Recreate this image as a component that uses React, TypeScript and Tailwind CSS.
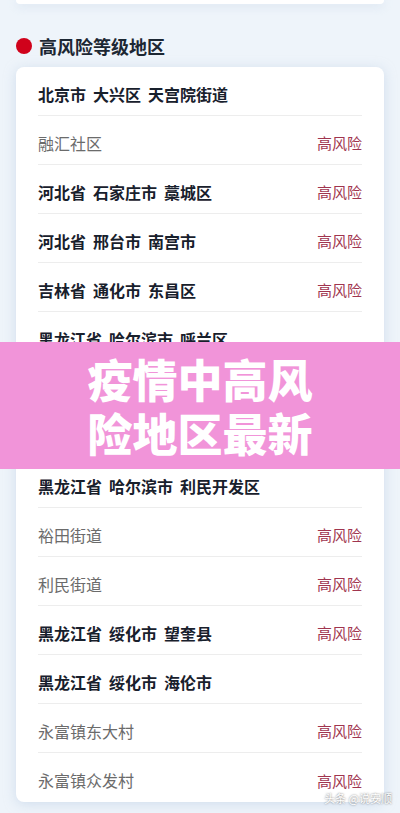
const rows: { name: string; bold?: boolean; risk?: boolean }[] = [
  { name: '北京市 大兴区 天宫院街道', bold: true },
  { name: '融汇社区', risk: true },
  { name: '河北省 石家庄市 藁城区', bold: true, risk: true },
  { name: '河北省 邢台市 南宫市', bold: true, risk: true },
  { name: '吉林省 通化市 东昌区', bold: true, risk: true },
  { name: '黑龙江省 哈尔滨市 呼兰区', bold: true },
  { name: '' },
  { name: '' },
  { name: '黑龙江省 哈尔滨市 利民开发区', bold: true },
  { name: '裕田街道', risk: true },
  { name: '利民街道', risk: true },
  { name: '黑龙江省 绥化市 望奎县', bold: true, risk: true },
  { name: '黑龙江省 绥化市 海伦市', bold: true },
  { name: '永富镇东大村', risk: true },
  { name: '永富镇众发村', risk: true },
];

export default function App() {
  return (
    <div
      className="relative w-[400px] h-[813px] overflow-hidden bg-[#eef4fa]"
      style={{ fontFamily: '"Noto Sans CJK SC", "Noto Sans", sans-serif' }}
    >
      {/* bottom edge of the previous card */}
      <div className="mx-4 h-[4px] rounded-b-lg bg-white shadow-[0_2px_10px_rgba(180,200,225,0.45)]" />

      <div className="flex items-center h-[22px] mt-[31px] px-4">
        <span className="w-4 h-4 rounded-full bg-[#d0021b]" />
        <span className="ml-[7px] text-[18px] font-bold leading-none text-[#1c2733]">高风险等级地区</span>
      </div>

      <div className="mx-4 mt-[10px] rounded-lg bg-white px-[22px] shadow-[0_2px_12px_rgba(180,200,225,0.5)]">
        {rows.map((r, i) => (
          <div
            key={i}
            className={`flex items-center justify-between h-[49px] pt-[5px] ${i < rows.length - 1 ? 'border-b border-[#ededed]' : ''}`}
          >
            <div
              className={`flex gap-[7px] text-[16px] leading-none ${r.bold ? 'font-bold text-[#18202c]' : 'text-[#6b6b6b]'}`}
            >
              {r.name.split(' ').map((s, j) => (
                <span key={j}>{s}</span>
              ))}
            </div>
            {r.risk && <span className="text-[15px] leading-none text-[#a0354f]">高风险</span>}
          </div>
        ))}
      </div>

      <div className="absolute left-0 right-0 top-[342px] h-[127px] bg-[#f194d9] flex flex-col items-center justify-center">
        <div className="text-[45px] leading-[54px] font-black text-white">疫情中高风</div>
        <div className="text-[45px] leading-[54px] font-black text-white">险地区最新</div>
      </div>

      <div className="absolute right-[8px] top-[793px] text-[11px] leading-none text-white [text-shadow:0_0_2px_rgba(0,0,0,0.6)]">
        头条 @说安顺
      </div>
    </div>
  );
}
